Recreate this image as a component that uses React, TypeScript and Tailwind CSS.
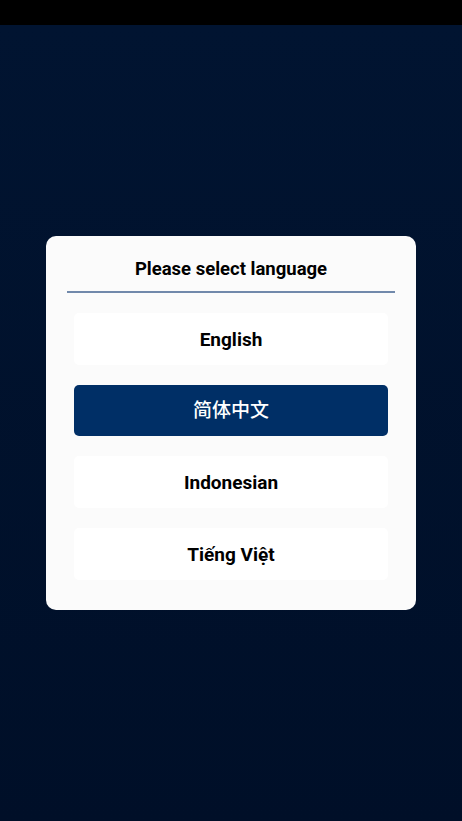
const languages = ["English", "简体中文", "Indonesian", "Tiếng Việt"];

function App() {
  const selected = "简体中文";

  return (
    <div
      className="min-h-screen flex flex-col bg-black"
      style={{ fontFamily: 'Roboto, "Noto Sans CJK SC", sans-serif' }}
    >
      <div className="h-[25px] bg-black" />
      <div className="flex-1 flex items-center justify-center bg-gradient-to-b from-[#011431] to-[#000f28]">
        <div className="w-[370px] rounded-[10px] bg-[#fbfbfb] px-[21px] pt-[20px] pb-[30px]">
          <h1 className="text-center text-[18.5px] leading-[26px] font-bold text-black">
            Please select language
          </h1>
          <div className="mt-[9px] h-[2px] bg-[#7189ab]" />
          <div className="flex flex-col gap-[20px] px-[7px] pt-[20px]">
            {languages.map((lang) => (
              <button
                key={lang}
                className={
                  lang === selected
                    ? "h-[51px] pt-[2px] rounded-[5px] bg-[#002f66] text-white text-[19px] font-medium"
                    : "h-[52px] pt-[3px] rounded-[5px] bg-white text-black text-[19px] font-bold"
                }
              >
                {lang}
              </button>
            ))}
          </div>
        </div>
      </div>
    </div>
  );
}

export default App;
